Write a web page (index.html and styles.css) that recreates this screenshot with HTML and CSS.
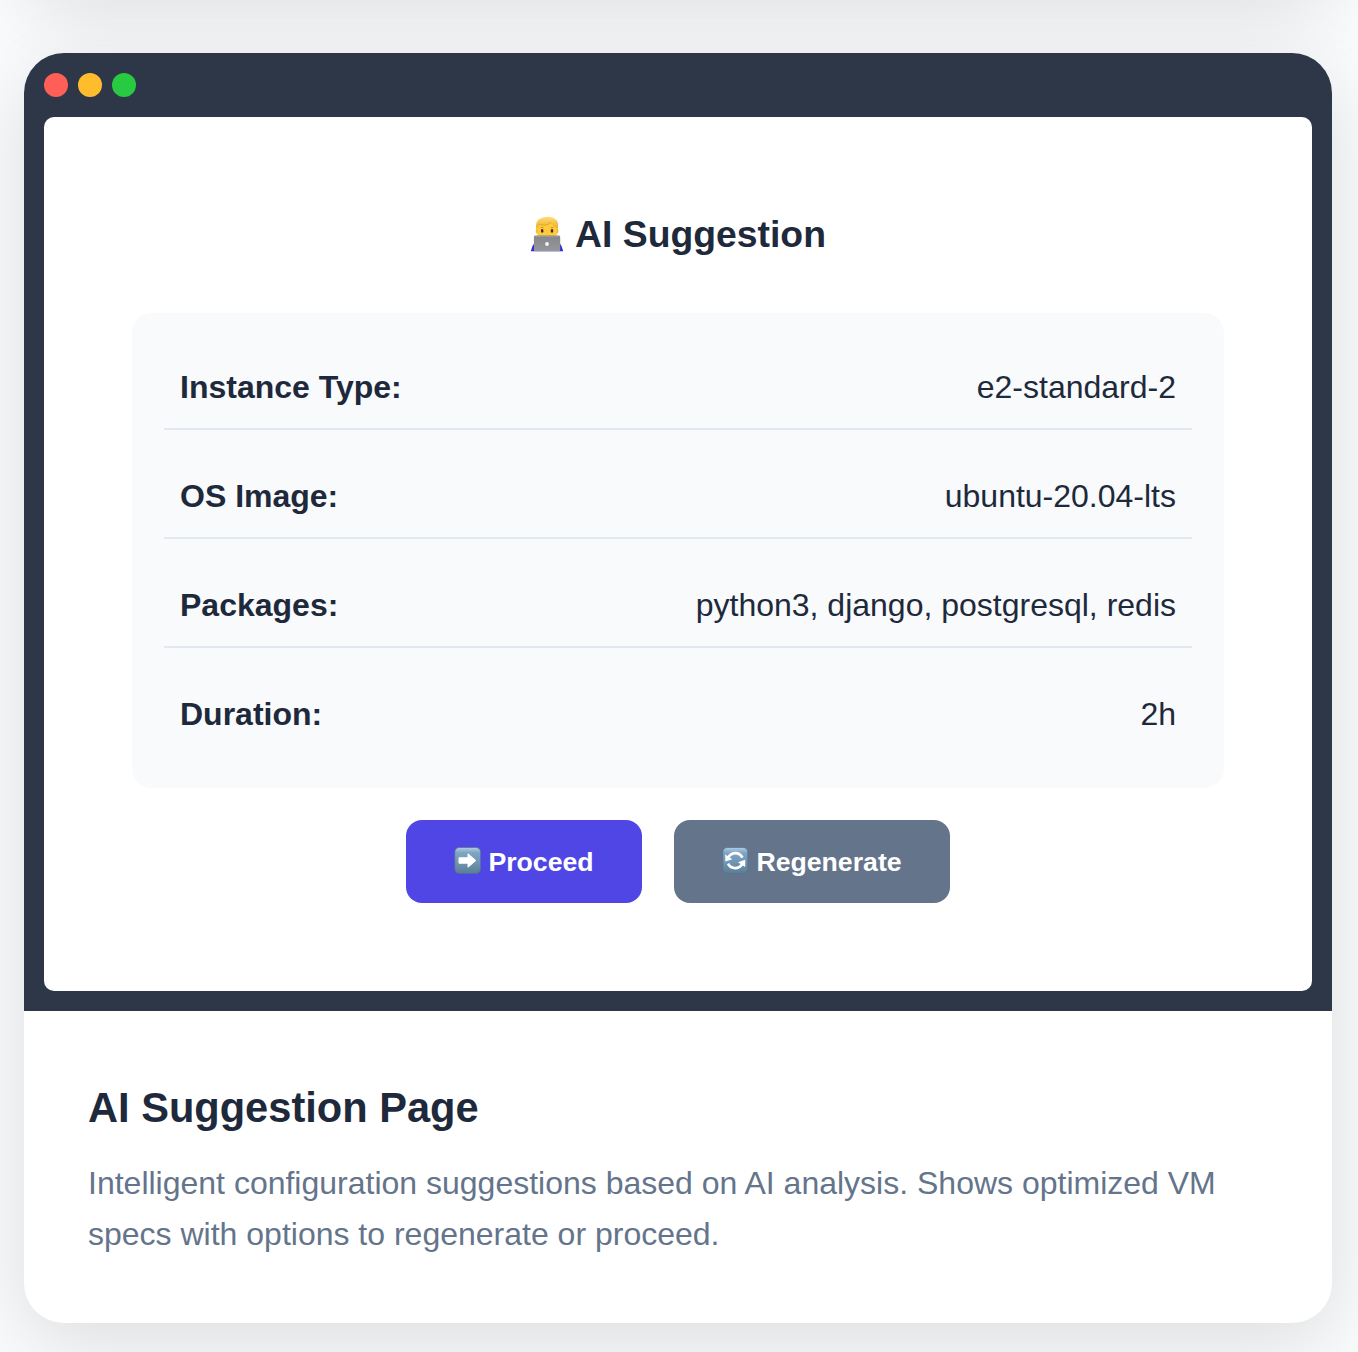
FILE: index.html
```html
<!DOCTYPE html>
<html lang="en">
<head>
<meta charset="utf-8">
<title>AI Suggestion Page</title>
<link rel="stylesheet" href="styles.css">
</head>
<body>
<svg width="0" height="0" class="defs" aria-hidden="true">
  <defs>
    <linearGradient id="tile" x1="0" y1="0" x2="0" y2="1">
      <stop offset="0" stop-color="#b2cee2"/><stop offset=".2" stop-color="#7fa5c5"/><stop offset=".55" stop-color="#7197b5"/><stop offset="1" stop-color="#5b7d96"/>
    </linearGradient>
    <linearGradient id="hair" x1="0" y1="0" x2="0" y2="1">
      <stop offset="0" stop-color="#ffdc79"/><stop offset="1" stop-color="#eba91e"/>
    </linearGradient>
    <linearGradient id="laptop" x1="0" y1="0" x2="0" y2="1">
      <stop offset="0" stop-color="#85878b"/><stop offset="1" stop-color="#96979a"/>
    </linearGradient>
  </defs>
</svg>
<main class="gallery">
  <div class="card card-previous"></div>
  <article class="card">
    <div class="mockup">
      <div class="dots"><span class="dot red"></span><span class="dot yellow"></span><span class="dot green"></span></div>
      <div class="screen">
        <h2 class="screen-title">
          <svg class="person" viewBox="0 0 34 36" aria-hidden="true">
            <path d="M.8 35.300l1.600-5q.8-2.500 3-3h23.200q2.200.5 3 3l1.600 5z" fill="#2e2bd0"/>
            <path d="M6.500 13.500Q4.600 6.500 9 3.200 13 .5 18 .7q8 .3 10 6 .8 3-.5 7z" fill="url(#hair)"/>
            <rect x="5.800" y="12" width="22.600" height="6" rx="2.800" fill="#f7b92a"/>
            <path d="M7.500 12q1.300-1.500 2-3.500 6 2.500 12-1 2 3 5 4.500v7q-1.500 5-9.500 5t-9.500-5z" fill="#ffcb3a"/>
            <path d="M8.500 8.300q7 2.500 12.500-1.800" fill="none" stroke="#d99c22" stroke-width=".6"/>
            <ellipse cx="12.200" cy="14.900" rx="1.300" ry="1.800" fill="#40261a"/><ellipse cx="22" cy="14.900" rx="1.300" ry="1.800" fill="#40261a"/>
            <path d="M10.600 11.900q1.500-1 3 0M20.600 11.900q1.500-1 3 0" fill="none" stroke="#a66b20" stroke-width=".6"/>
            <rect x="3.900" y="19.500" width="26.300" height="15.800" rx="1.500" fill="url(#laptop)"/>
            <path d="M4.500 20.200h25" stroke="#a9abad" stroke-width=".7"/>
            <circle cx="17" cy="28" r="1.900" fill="#f5f5f5"/>
          </svg>
          <span>AI Suggestion</span>
        </h2>
        <dl class="specs">
          <div class="spec"><dt>Instance Type:</dt><dd>e2-standard-2</dd></div>
          <div class="spec"><dt>OS Image:</dt><dd>ubuntu-20.04-lts</dd></div>
          <div class="spec"><dt>Packages:</dt><dd>python3, django, postgresql, redis</dd></div>
          <div class="spec"><dt>Duration:</dt><dd>2h</dd></div>
        </dl>
        <div class="actions">
          <button class="btn primary">
            <svg class="tile" viewBox="0 0 27 27" aria-hidden="true"><rect x=".8" y=".5" width="25.800" height="26" rx="4.500" fill="url(#tile)" stroke="#52738c" stroke-width=".7"/><path d="M5 10.800h9v-4L21.800 13.500l-7.800 6.700v-4H5z" fill="#fff" stroke="#fff" stroke-linejoin="round"/></svg>
            <span>Proceed</span>
          </button>
          <button class="btn secondary">
            <svg class="tile" viewBox="0 0 27 27" aria-hidden="true"><rect x=".8" y=".5" width="25" height="26" rx="4.500" fill="url(#tile)" stroke="#52738c" stroke-width=".7"/><path d="M6.200 10.500Q9 6.200 13.200 6.200q4.800 0 7.300 4.500M20.300 17Q17.500 21.200 13.200 21.200q-4.700 0-7.200-4.500" fill="none" stroke="#fff" stroke-width="2.700"/><path d="M3.300 7.500v7l7-2.200zM23.200 20v-7.300l-7.300 2.500z" fill="#fff"/></svg>
            <span>Regenerate</span>
          </button>
        </div>
      </div>
    </div>
    <div class="caption">
      <h3>AI Suggestion Page</h3>
      <p>Intelligent configuration suggestions based on AI analysis. Shows optimized VM specs with options to regenerate or proceed.</p>
    </div>
  </article>
</main>
</body>
</html>
```
FILE: styles.css
```css
* { box-sizing: border-box; margin: 0; padding: 0; }
html { overflow: hidden; }
body {
  height: 1352px;
  overflow: hidden;
  background: #fafbfc;
  color: #1e293b;
  font-family: "Liberation Sans", Arial, sans-serif;
}
.defs { display: block; }
.gallery {
  display: flex;
  flex-direction: column;
  gap: 64px;
  margin-top: -311px;
  padding: 0 26px 0 24px;
}
.card {
  background: #fff;
  border-radius: 40px;
  box-shadow: 0 20px 80px rgba(0, 0, 0, .12);
}
.card-previous { height: 300px; }
.mockup {
  padding: 20px;
  background: #2d3748;
  border-radius: 40px 40px 0 0;
}
.dots { display: flex; gap: 10px; margin-bottom: 20px; }
.dot { width: 24px; height: 24px; border-radius: 50%; }
.red { background: #ff5f57; }
.yellow { background: #ffbd2e; }
.green { background: #28ca42; }
.screen {
  height: 874px;
  padding: 88px;
  background: #fff;
  border-radius: 10px;
}
.screen-title {
  display: flex;
  justify-content: center;
  align-items: center;
  gap: 11px;
  height: 59px;
  margin-bottom: 49px;
  font-size: 37.33px;
  line-height: 59px;
}
.person { width: 34px; height: 36px; margin-bottom: 1px; }
.specs {
  display: flex;
  flex-direction: column;
  gap: 24px;
  padding: 32px 32px 33px;
  background: #f8fafc;
  border-radius: 20px;
}
.spec {
  display: flex;
  justify-content: space-between;
  padding: 17px 16px 15px;
  border-bottom: 2px solid #e2e8f0;
  font-size: 32px;
  line-height: 51px;
}
.spec:last-child { border-bottom: 0; }
.spec dt { font-weight: 700; }
.actions {
  display: flex;
  justify-content: center;
  gap: 32px;
  margin-top: 32px;
}
.btn {
  display: flex;
  align-items: center;
  justify-content: center;
  gap: 7px;
  width: 236px;
  height: 83px;
  border: 0;
  border-radius: 16px;
  color: #fff;
  font: 700 26.67px/40px "Liberation Sans", Arial, sans-serif;
}
.tile { width: 27px; height: 27px; margin-bottom: 2px; }
.primary { background: #4f46e5; }
.secondary { width: 276px; background: #64748b; }
.caption { height: 312px; padding: 64px; }
.caption h3 {
  margin-bottom: 17px;
  font-size: 41.6px;
  line-height: 66px;
}
.caption p {
  color: #64748b;
  font-size: 32px;
  line-height: 51px;
}
```
